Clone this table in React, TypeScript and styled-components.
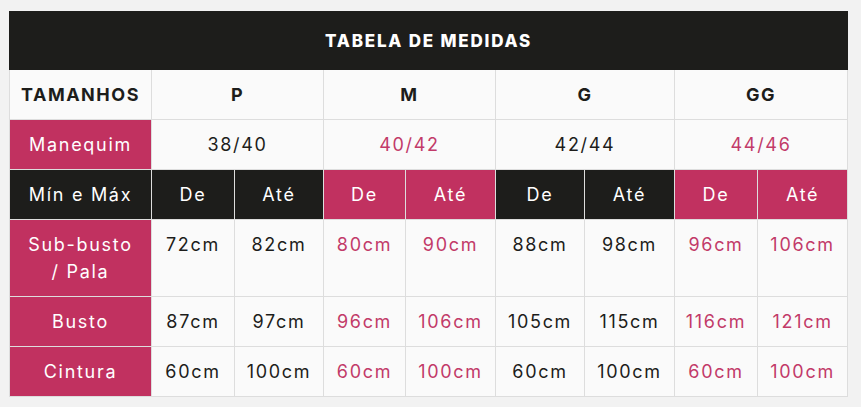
import React from "react";
import styled, { createGlobalStyle } from "styled-components";

const Global = createGlobalStyle`
  html, body { margin: 0; padding: 0; background: #f2f2f2; }
  body { font-family: "Inter", "Noto Sans", sans-serif; }
`;

const DARK = "#1d1d1b";
const PINK = "#c13160";
const PINK_TEXT = "#c23a69";
const BORDER = "#dddddd";

const Wrap = styled.div`
  padding: 11px 13px 12px 9px;
`;

const Table = styled.table`
  width: 839px;
  border-collapse: collapse;
  table-layout: fixed;
  background: #fafafa;
  border: 1px solid ${BORDER};
`;

type Tone = "dark" | "pink" | "plain";

const Cell = styled.td<{ $tone?: Tone; $accent?: boolean; $bold?: boolean; $top?: boolean }>`
  border: 1px solid ${BORDER};
  padding: 11px 0;
  text-align: center;
  vertical-align: ${(p) => (p.$top ? "top" : "middle")};
  font-size: 18px;
  line-height: 27px;
  letter-spacing: ${(p) => (p.$bold ? "1.5px" : "1.7px")};
  font-weight: ${(p) => (p.$bold ? 700 : 400)};
  white-space: nowrap;
  background: ${(p) => (p.$tone === "dark" ? DARK : p.$tone === "pink" ? PINK : "#fafafa")};
  color: ${(p) =>
    p.$tone === "dark" || p.$tone === "pink" ? "#ffffff" : p.$accent ? PINK_TEXT : "#1d1d1b"};
`;

const Title = styled.th`
  background: ${DARK};
  color: #fff;
  font-size: 17px;
  font-weight: 800;
  letter-spacing: 1.8px;
  height: 57px;
  padding: 0;
  text-align: center;
  vertical-align: middle;
  border: 1px solid ${DARK};
`;

const widths = [142, 83, 89, 82, 90, 89, 90, 83, 90];
const sizes = [
  { n: "P", m: "38/40" },
  { n: "M", m: "40/42" },
  { n: "G", m: "42/44" },
  { n: "GG", m: "44/46" },
];
const rows = [
  { label: ["Sub-busto", "/ Pala"], v: ["72cm", "82cm", "80cm", "90cm", "88cm", "98cm", "96cm", "106cm"] },
  { label: ["Busto"], v: ["87cm", "97cm", "96cm", "106cm", "105cm", "115cm", "116cm", "121cm"] },
  { label: ["Cintura"], v: ["60cm", "100cm", "60cm", "100cm", "60cm", "100cm", "60cm", "100cm"] },
];

export default function App() {
  return (
    <Wrap>
      <Global />
      <Table>
        <colgroup>
          {widths.map((w, i) => (
            <col key={i} style={{ width: w }} />
          ))}
        </colgroup>
        <thead>
          <tr>
            <Title colSpan={9}>TABELA DE MEDIDAS</Title>
          </tr>
        </thead>
        <tbody>
          <tr>
            <Cell $bold>TAMANHOS</Cell>
            {sizes.map((s) => (
              <Cell key={s.n} colSpan={2} $bold>
                {s.n}
              </Cell>
            ))}
          </tr>
          <tr>
            <Cell $tone="pink">Manequim</Cell>
            {sizes.map((s, i) => (
              <Cell key={s.n} colSpan={2} $accent={i % 2 === 1}>
                {s.m}
              </Cell>
            ))}
          </tr>
          <tr>
            <Cell $tone="dark">Mín e Máx</Cell>
            {sizes.map((s, i) => (
              <React.Fragment key={s.n}>
                <Cell $tone={i % 2 ? "pink" : "dark"}>De</Cell>
                <Cell $tone={i % 2 ? "pink" : "dark"}>Até</Cell>
              </React.Fragment>
            ))}
          </tr>
          {rows.map((r) => (
            <tr key={r.label[0]}>
              <Cell $tone="pink">
                {r.label.map((l, i) => (
                  <React.Fragment key={i}>
                    {i > 0 && <br />}
                    {l}
                  </React.Fragment>
                ))}
              </Cell>
              {r.v.map((v, i) => (
                <Cell key={i} $top $accent={Math.floor(i / 2) % 2 === 1}>
                  {v}
                </Cell>
              ))}
            </tr>
          ))}
        </tbody>
      </Table>
    </Wrap>
  );
}
